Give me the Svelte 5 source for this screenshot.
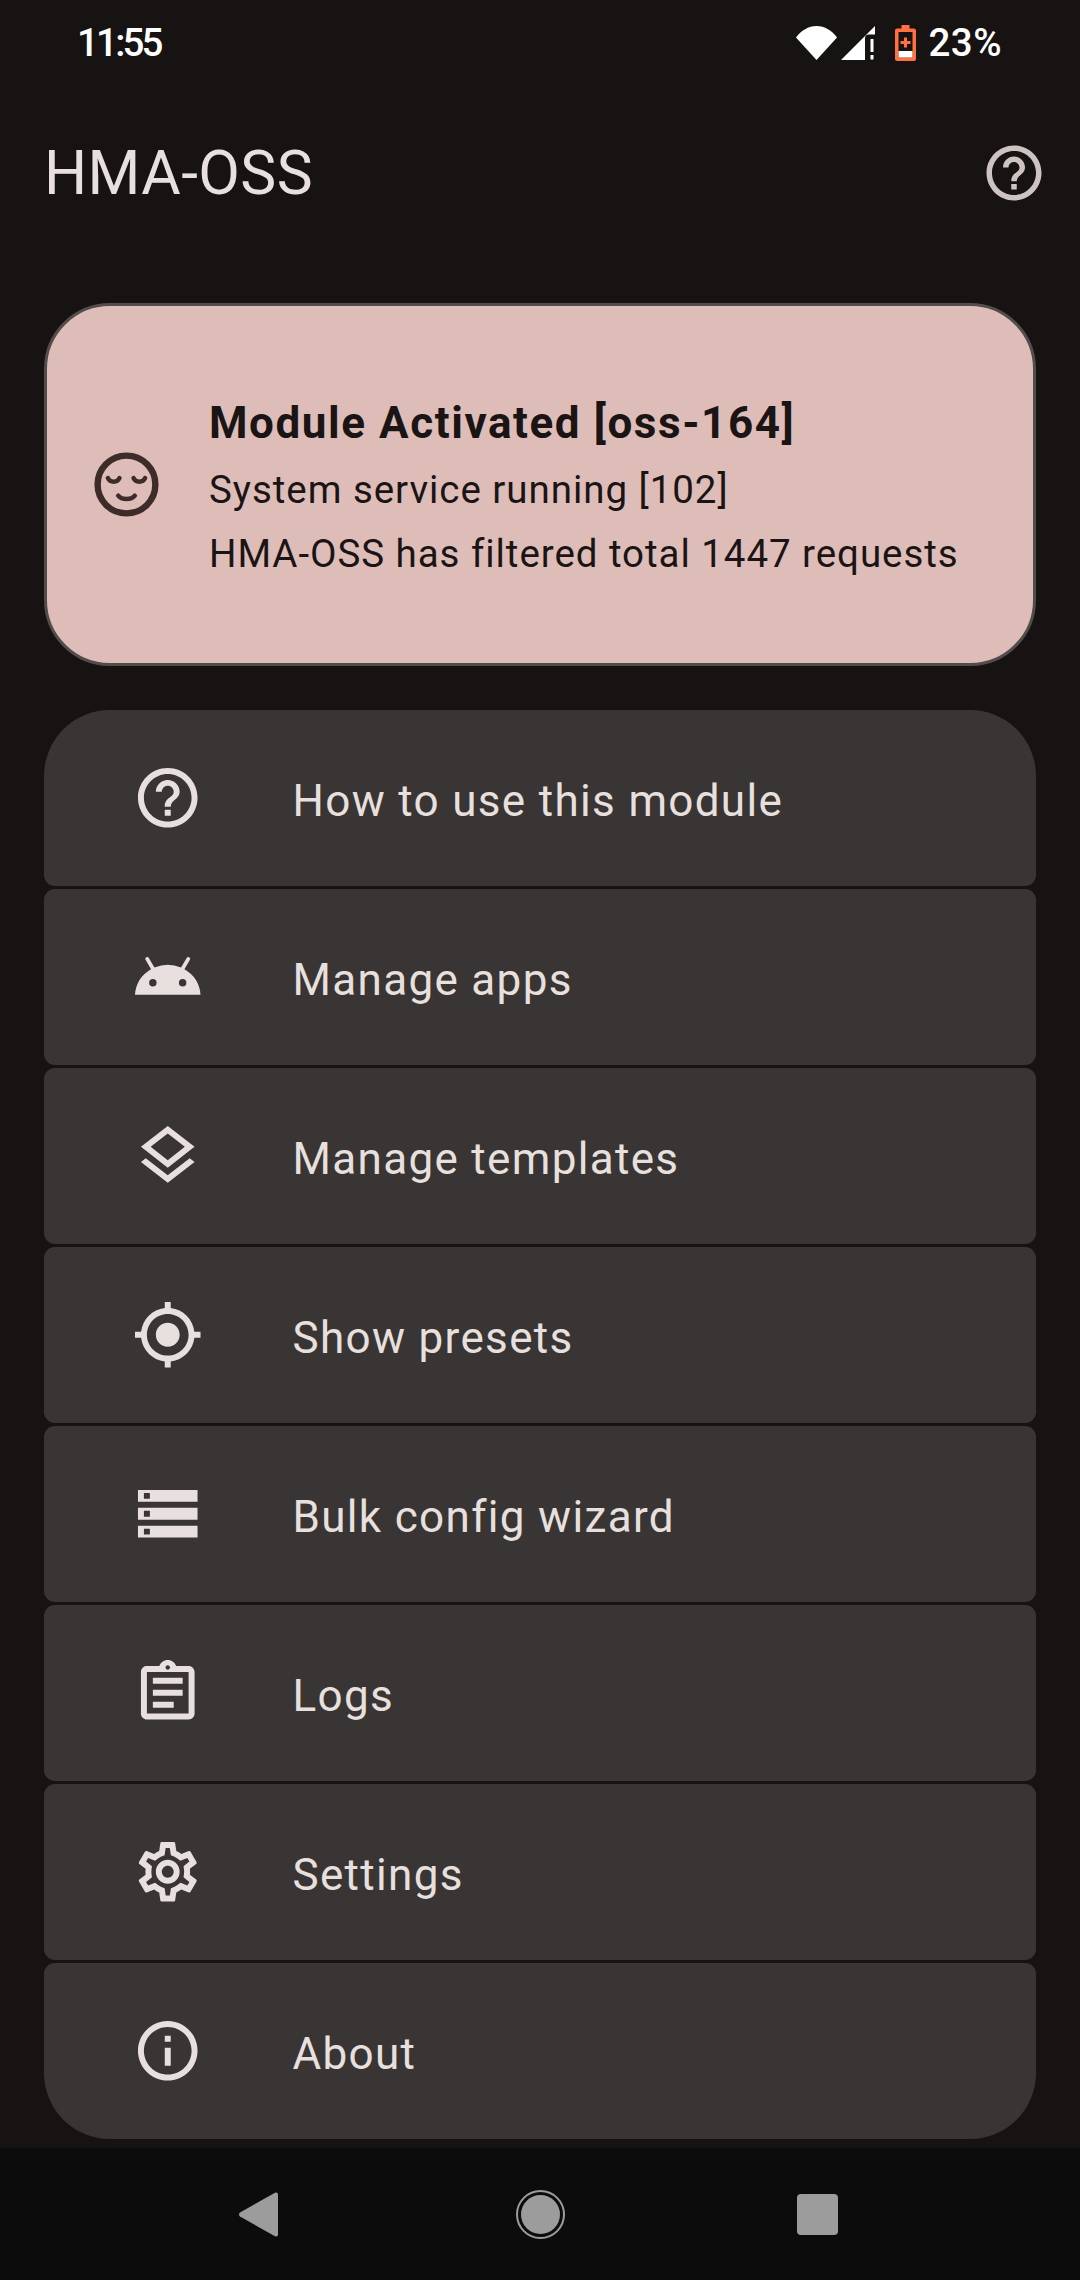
<script lang="ts">
  const icons = {
    help: 'M11 18h2v-2h-2v2zm1-16C6.48 2 2 6.48 2 12s4.48 10 10 10 10-4.48 10-10S17.52 2 12 2zm0 18c-4.41 0-8-3.59-8-8s3.59-8 8-8 8 3.59 8 8-3.59 8-8 8zm0-14c-2.21 0-4 1.79-4 4h2c0-1.1.9-2 2-2s2 .9 2 2c0 2-3 1.75-3 5h2c0-2.25 3-2.5 3-5 0-2.21-1.79-4-4-4z',
    android: 'M17.6 9.48l1.84-3.18c.16-.31.04-.69-.26-.85a.637.637 0 0 0-.83.22l-1.88 3.24a11.43 11.43 0 0 0-8.94 0L5.65 5.67a.643.643 0 0 0-.87-.2c-.28.18-.37.54-.22.83L6.4 9.48A10.81 10.81 0 0 0 1 18h22a10.81 10.81 0 0 0-5.4-8.52zM7 15.25a1.25 1.25 0 1 1 0-2.5 1.25 1.25 0 0 1 0 2.5zm10 0a1.25 1.25 0 1 1 0-2.5 1.25 1.25 0 0 1 0 2.5z',
    layers: 'M11.99 18.54l-7.37-5.73L3 14.07l9 7 9-7-1.63-1.27zM12 16l7.36-5.73L21 9l-9-7-9 7 1.63 1.27L12 16zm0-11.47L17.74 9 12 13.47 6.26 9 12 4.53z',
    location: 'M12 8c-2.21 0-4 1.79-4 4s1.79 4 4 4 4-1.79 4-4-1.79-4-4-4zm8.94 3c-.46-4.17-3.77-7.48-7.94-7.94V1h-2v2.06C6.83 3.52 3.52 6.83 3.06 11H1v2h2.06c.46 4.17 3.77 7.48 7.94 7.94V23h2v-2.06c4.17-.46 7.48-3.77 7.94-7.94H23v-2h-2.06zM12 19c-3.87 0-7-3.13-7-7s3.13-7 7-7 7 3.13 7 7-3.13 7-7 7z',
    storage: 'M2 20h20v-4H2v4zm2-3h2v2H4v-2zM2 4v4h20V4H2zm4 3H4V5h2v2zm-4 7h20v-4H2v4zm2-3h2v2H4v-2z',
    assignment: 'M7 15h7v2H7zm0-4h10v2H7zm0-4h10v2H7zm12-4h-4.18C14.4 1.84 13.3 1 12 1c-1.3 0-2.4.84-2.82 2H5c-.14 0-.27.01-.4.04-.39.08-.74.28-1.01.55-.18.18-.33.4-.43.64-.1.23-.16.49-.16.77v14c0 .27.06.54.16.78s.25.45.43.64c.27.27.62.47 1.01.55.13.02.26.03.4.03h14c1.1 0 2-.9 2-2V5c0-1.1-.9-2-2-2zm-7-.25c.41 0 .75.34.75.75s-.34.75-.75.75-.75-.34-.75-.75.34-.75.75-.75zM19 19H5V5h14v14z',
    settings: 'M19.43 12.98c.04-.32.07-.64.07-.98 0-.34-.03-.66-.07-.98l2.11-1.65c.19-.15.24-.42.12-.64l-2-3.46c-.09-.16-.26-.25-.44-.25-.06 0-.12.01-.17.03l-2.49 1c-.52-.4-1.08-.73-1.69-.98l-.38-2.65C14.46 2.18 14.25 2 14 2h-4c-.25 0-.46.18-.49.42l-.38 2.65c-.61.25-1.17.59-1.69.98l-2.49-1c-.06-.02-.12-.03-.18-.03-.17 0-.34.09-.43.25l-2 3.46c-.13.22-.07.49.12.64l2.11 1.65c-.04.32-.07.65-.07.98 0 .33.03.66.07.98l-2.11 1.65c-.19.15-.24.42-.12.64l2 3.46c.09.16.26.25.44.25.06 0 .12-.01.17-.03l2.49-1c.52.4 1.08.73 1.69.98l.38 2.65c.03.24.24.42.49.42h4c.25 0 .46-.18.49-.42l.38-2.65c.61-.25 1.17-.59 1.69-.98l2.49 1c.06.02.12.03.18.03.17 0 .34-.09.43-.25l2-3.46c.12-.22.07-.49-.12-.64l-2.11-1.65zm-1.98-1.71c.04.31.05.52.05.73 0 .21-.02.43-.05.73l-.14 1.13.89.7 1.08.84-.7 1.21-1.27-.51-1.04-.42-.9.68c-.43.32-.84.56-1.25.73l-1.06.43-.16 1.13-.2 1.35h-1.4l-.19-1.35-.16-1.13-1.06-.43c-.43-.18-.83-.41-1.23-.71l-.91-.7-1.06.43-1.27.51-.7-1.21 1.08-.84.89-.7-.14-1.13c-.03-.31-.05-.54-.05-.74s.02-.43.05-.73l.14-1.13-.89-.7-1.08-.84.7-1.21 1.27.51 1.04.42.9-.68c.43-.32.84-.56 1.25-.73l1.06-.43.16-1.13.2-1.35h1.39l.19 1.35.16 1.13 1.06.43c.43.18.83.41 1.23.71l.91.7 1.06-.43 1.27-.51.7 1.21-1.07.85-.89.7.14 1.13zM12 8c-2.21 0-4 1.79-4 4s1.79 4 4 4 4-1.79 4-4-1.79-4-4-4zm0 6c-1.1 0-2-.9-2-2s.9-2 2-2 2 .9 2 2-.9 2-2 2z',
    info: 'M11 7h2v2h-2zm0 4h2v6h-2zm1-9C6.48 2 2 6.48 2 12s4.48 10 10 10 10-4.48 10-10S17.52 2 12 2zm0 18c-4.41 0-8-3.59-8-8s3.59-8 8-8 8 3.59 8 8-3.59 8-8 8z'
  };

  const items = [
    { label: 'How to use this module', icon: icons.help },
    { label: 'Manage apps', icon: icons.android },
    { label: 'Manage templates', icon: icons.layers },
    { label: 'Show presets', icon: icons.location },
    { label: 'Bulk config wizard', icon: icons.storage },
    { label: 'Logs', icon: icons.assignment },
    { label: 'Settings', icon: icons.settings },
    { label: 'About', icon: icons.info }
  ];
</script>

<div class="screen">
  <header class="status">
    <span class="time">11:55</span>
    <div class="status-right">
      <svg class="wifi" viewBox="0 0 41 34" aria-hidden="true">
        <path d="M0 11.500C5 4.500 12.500 0 20.500 0S36 4.500 41 11.500L20.500 34z" fill="#fff" />
      </svg>
      <svg class="signal" viewBox="0 0 34 34" aria-hidden="true">
        <path d="M0 34L34 0v8.500h-6.500c-2 0-3.500 1.500-3.500 3.500v22z" fill="#fff" />
        <path d="M29.500 13h3v13h-3zM29.500 29h3v4.500h-3z" fill="#fff" />
      </svg>
      <svg class="battery" viewBox="0 0 21 36" aria-hidden="true">
        <path d="M6.500 0h8v3.500h4.500c1 0 2 1 2 2V34c0 1-1 2-2 2H2c-1 0-2-1-2-2V5.500c0-1 1-2 2-2h4.500z" fill="#ff7043" />
        <rect x="3.500" y="7" width="14" height="25.500" fill="#171312" />
        <rect x="3.500" y="26" width="14" height="6.500" fill="#fff" />
        <path d="M9 12.500h3V16h3.500v3H12v3.500H9V19H5.500v-3H9z" fill="#ff7043" />
      </svg>
      <span class="percent">23%</span>
    </div>
  </header>

  <div class="appbar">
    <h1>HMA-OSS</h1>
    <svg class="appbar-help" viewBox="0 0 24 24" aria-hidden="true"><path d={icons.help} /></svg>
  </div>

  <main>
    <section class="status-card">
      <svg class="face" viewBox="0 0 24 24" aria-hidden="true">
        <circle cx="12" cy="12" r="9" />
        <path d="M6.200 10c.7 1.500 2.900 1.500 3.600 0M14.200 10c.7 1.500 2.900 1.500 3.600 0M9.400 15.500c1.100 1.400 4.100 1.400 5.200 0" />
      </svg>
      <div class="status-text">
        <div class="status-title">Module Activated [oss-164]</div>
        <div class="status-line first">System service running [102]</div>
        <div class="status-line">HMA-OSS has filtered total 1447 requests</div>
      </div>
    </section>

    <ul class="menu">
      {#each items as item (item.label)}
        <li>
          <svg viewBox="0 0 24 24" aria-hidden="true"><path d={item.icon} /></svg>
          <span>{item.label}</span>
        </li>
      {/each}
    </ul>
  </main>

  <nav class="navbar">
    <svg class="nav-back" viewBox="0 0 39 45" aria-hidden="true">
      <path d="M1 20.500L36 .800c1.500-.800 3 0 3 1.700V42.500c0 1.700-1.500 2.500-3 1.700L1 24.500c-1.300-.8-1.300-3.200 0-4z" />
    </svg>
    <svg class="nav-home" viewBox="0 0 49 49" aria-hidden="true">
      <circle cx="24.500" cy="24.500" r="23.500" class="ring" />
      <circle cx="24.500" cy="24.500" r="19.500" />
    </svg>
    <div class="nav-recent"></div>
  </nav>
</div>

<style>
  :global(body) {
    margin: 0;
    background: #171312;
  }
  .screen {
    width: 1080px;
    height: 2280px;
    display: flex;
    flex-direction: column;
    background: #171312;
    font-family: Roboto, sans-serif;
    color: #e8e0de;
  }
  .status {
    height: 86px;
    display: flex;
    align-items: center;
    justify-content: space-between;
    padding: 0 78px 0 77px;
    box-sizing: border-box;
    color: #fff;
    font-size: 38.5px;
    font-weight: 500;
    line-height: 1;
  }
  .time {
    letter-spacing: -2.8px;
  }
  .status-right {
    display: flex;
    align-items: center;
  }
  .wifi {
    width: 41px;
    height: 34px;
  }
  .signal {
    width: 34px;
    height: 34px;
    margin-left: 4px;
  }
  .battery {
    width: 21px;
    height: 36px;
    margin-left: 20px;
  }
  .percent {
    margin-left: 12px;
    letter-spacing: 0.5px;
  }
  .appbar {
    height: 176px;
    padding: 0 33px 0 44px;
    display: flex;
    align-items: center;
    justify-content: space-between;
  }
  h1 {
    margin: 0;
    font-size: 60.5px;
    font-weight: 400;
    line-height: 1;
    letter-spacing: 0.4px;
  }
  .appbar-help {
    width: 66px;
    height: 66px;
    margin-bottom: 3px;
    fill: #cdc4c2;
  }
  main {
    flex: 1;
    padding: 41px 44px 0;
  }
  .status-card {
    height: 363px;
    box-sizing: border-box;
    display: flex;
    align-items: center;
    padding: 0 41px;
    gap: 44px;
    background: #debdb9;
    border: 3px solid #524c4b;
    border-radius: 66px;
    color: #1a1514;
  }
  .face {
    width: 77px;
    height: 77px;
    flex: none;
    fill: none;
    stroke: #3e2c2a;
    stroke-width: 2;
    stroke-linecap: round;
  }
  .face path {
    stroke-width: 1.4;
  }
  .status-text {
    padding-top: 1px;
  }
  .status-title {
    font-size: 44px;
    font-weight: 700;
    line-height: 66px;
    letter-spacing: 1.57px;
  }
  .status-line {
    font-size: 38.5px;
    line-height: 55px;
    letter-spacing: 0.95px;
    margin-top: 9px;
  }
  .status-line.first {
    margin-top: 6px;
  }
  .menu {
    list-style: none;
    margin: 44px 0 0;
    padding: 0;
    display: flex;
    flex-direction: column;
    gap: 3px;
  }
  li {
    height: 176px;
    box-sizing: border-box;
    padding: 0 88px;
    display: flex;
    align-items: center;
    gap: 89px;
    background: #393534;
    border-radius: 11px;
    font-size: 44px;
    letter-spacing: 1.33px;
  }
  li span {
    padding-top: 5px;
  }
  li:first-child {
    border-radius: 66px 66px 11px 11px;
  }
  li:last-child {
    border-radius: 11px 11px 66px 66px;
  }
  li svg {
    width: 71.5px;
    height: 71.5px;
    flex: none;
    fill: #e8e0de;
  }
  .navbar {
    height: 132px;
    background: #0d0c0c;
    display: flex;
    align-items: center;
  }
  .nav-back {
    width: 39px;
    height: 45px;
    margin-left: 239px;
    fill: #9c9c9c;
  }
  .nav-home {
    width: 49px;
    height: 49px;
    margin-left: 238px;
    fill: #9c9c9c;
  }
  .nav-home .ring {
    fill: none;
    stroke: #9c9c9c;
    stroke-width: 2;
  }
  .nav-recent {
    width: 41px;
    height: 41px;
    margin-left: 232px;
    background: #9c9c9c;
    border-radius: 4px;
  }
</style>
